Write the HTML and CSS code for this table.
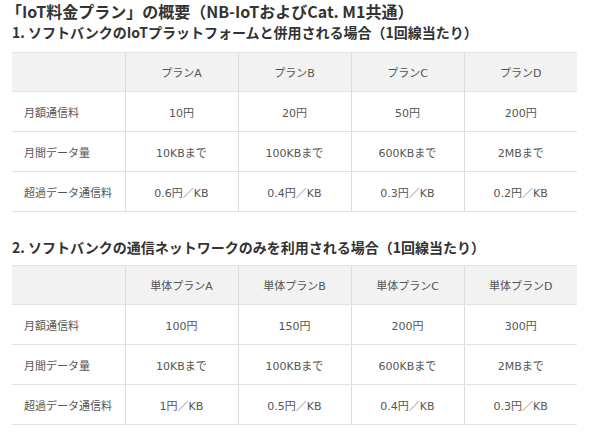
FILE: index.html
```html
<!DOCTYPE html>
<html lang="ja">
<head>
    <meta charset="UTF-8">
    <meta name="viewport" content="width=device-width, initial-scale=1.0">
    <title>IoT料金プラン</title>
    <link rel="stylesheet" href="styles.css">
</head>
<body>
    <h1 class="title">「IoT料金プラン」の概要（NB-IoTおよびCat. M1共通）</h1>

    <h2 class="section first">1. ソフトバンクのIoTプラットフォームと併用される場合（1回線当たり）</h2>
    <table class="plans">
        <tr>
            <th></th>
            <th>プランA</th>
            <th>プランB</th>
            <th>プランC</th>
            <th>プランD</th>
        </tr>
        <tr>
            <td>月額通信料</td>
            <td>10円</td>
            <td>20円</td>
            <td>50円</td>
            <td>200円</td>
        </tr>
        <tr>
            <td>月間データ量</td>
            <td>10KBまで</td>
            <td>100KBまで</td>
            <td>600KBまで</td>
            <td>2MBまで</td>
        </tr>
        <tr>
            <td>超過データ通信料</td>
            <td>0.6円／KB</td>
            <td>0.4円／KB</td>
            <td>0.3円／KB</td>
            <td>0.2円／KB</td>
        </tr>
    </table>

    <h2 class="section second">2. ソフトバンクの通信ネットワークのみを利用される場合（1回線当たり）</h2>
    <table class="plans">
        <tr>
            <th></th>
            <th>単体プランA</th>
            <th>単体プランB</th>
            <th>単体プランC</th>
            <th>単体プランD</th>
        </tr>
        <tr>
            <td>月額通信料</td>
            <td>100円</td>
            <td>150円</td>
            <td>200円</td>
            <td>300円</td>
        </tr>
        <tr>
            <td>月間データ量</td>
            <td>10KBまで</td>
            <td>100KBまで</td>
            <td>600KBまで</td>
            <td>2MBまで</td>
        </tr>
        <tr>
            <td>超過データ通信料</td>
            <td>1円／KB</td>
            <td>0.5円／KB</td>
            <td>0.4円／KB</td>
            <td>0.3円／KB</td>
        </tr>
    </table>
</body>
</html>
```

FILE: styles.css
```css
/* Grundlayout */
body {
    font-family: "Noto Sans CJK JP", "Noto Sans", sans-serif;
    margin: 0;
    padding: 0 13px 0 12px;
    background: #fff;
    color: #333;
}
.title {
    font-size: 16px;
    line-height: 23px;
    margin: 0 0 0 -6px;
    font-weight: bold;
    color: #333;
}
.section {
    font-size: 14px;
    line-height: 21px;
    font-weight: bold;
    color: #333;
}
.section.first {
    margin: -1px 0 9px 0;
}
.section.second {
    margin: 25px 0 7px 0;
}
.plans {
    width: 565px;
    table-layout: fixed;
    border-collapse: collapse;
    font-family: "DejaVu Sans", "Noto Sans CJK JP", sans-serif;
    font-size: 11px;
    color: #555;
}
.plans th,
.plans td {
    height: 39px;
    padding: 0;
    text-align: center;
    border-top: 1px solid #e3e3e3;
    border-bottom: 1px solid #e3e3e3;
    border-left: 1px solid #dcdcdc;
    font-weight: normal;
}
.plans th {
    height: 38px;
    background: #f2f2f3;
}
.plans th:first-child,
.plans td:first-child {
    border-left: none;
    text-align: left;
    padding-left: 12px;
}
```
